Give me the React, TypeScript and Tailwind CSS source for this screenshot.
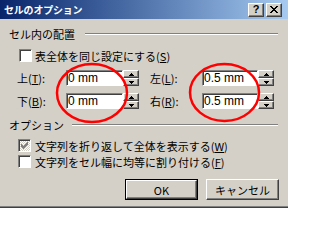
import React from "react";

const raised =
  "border border-t-white border-l-white border-r-[#404040] border-b-[#404040] shadow-[inset_-1px_-1px_0_#808080] bg-[#d4d0c8]";
const sunken =
  "border border-t-[#808080] border-l-[#808080] border-r-white border-b-white shadow-[inset_1px_1px_0_#404040]";

const CheckMark = () => (
  <svg width="7" height="7" viewBox="0 0 7 7" className="block">
    <g fill="#808080">
      <rect x="0" y="2" width="1" height="3" />
      <rect x="1" y="3" width="1" height="3" />
      <rect x="2" y="4" width="1" height="3" />
      <rect x="3" y="3" width="1" height="3" />
      <rect x="4" y="2" width="1" height="3" />
      <rect x="5" y="1" width="1" height="3" />
      <rect x="6" y="0" width="1" height="3" />
    </g>
  </svg>
);

const Checkbox = ({ checked }: { checked?: boolean }) => (
  <div
    className={`${sunken} w-[13px] h-[13px] flex items-center justify-center ${
      checked
        ? "bg-[repeating-conic-gradient(#d4d0c8_0%_25%,#ffffff_0%_50%)] bg-[length:2px_2px]"
        : "bg-white"
    }`}>
    {checked && <CheckMark />}
  </div>
);

const Spinner = () => (
  <div className="flex flex-col w-[16px] h-[16px]">
    <div className={`${raised} h-[8px] flex items-center justify-center`}>
      <svg width="5" height="3" viewBox="0 0 5 3" className="block">
        <path d="M2 0h1v1h1v1h1v1H0V2h1V1h1z" fill="#000" />
      </svg>
    </div>
    <div className={`${raised} h-[8px] flex items-center justify-center`}>
      <svg width="5" height="3" viewBox="0 0 5 3" className="block">
        <path d="M0 0h5v1H4v1H3v1H2V2H1V1H0z" fill="#000" />
      </svg>
    </div>
  </div>
);

const Field = ({
  label,
  keyChar,
  value,
  labelW,
  inputW,
}: {
  label: string;
  keyChar: string;
  value: string;
  labelW: string;
  inputW: string;
}) => (
  <div className="flex items-center">
    <div className={labelW}>
      {label}(<u>{keyChar}</u>):
    </div>
    <div
      className={`${sunken} ${inputW} h-[16px] bg-white flex items-center pl-[1px] font-['Liberation_Sans',sans-serif] text-[12px]`}>
      {value}
    </div>
    <Spinner />
  </div>
);

const Header = ({ text, gap }: { text: string; gap: string }) => (
  <div className="flex items-center h-[12px] pl-[9px] pr-[10px]">
    <span className="whitespace-nowrap">{text}</span>
    <div className={`flex-1 ${gap} border-t border-t-[#808080] border-b border-b-white`} />
  </div>
);

export default function App() {
  return (
    <div className="relative w-[288px] h-[208px] bg-[#d4d0c8] overflow-hidden text-black text-[11px] leading-[12px] font-['Noto_Sans_CJK_JP',sans-serif]">
      <div className="h-[19px] flex items-center justify-between bg-linear-to-r from-[#0a246a] to-[#a6caf0] pl-[4px] pr-[6px]">
        <span className="text-white font-bold text-[10px] tracking-[-0.2px]">セルのオプション</span>
        <div className="flex gap-[2px]">
          <div className={`${raised} w-[16px] h-[14px] flex items-center justify-center`}>
            <span className="font-['Liberation_Sans',sans-serif] font-bold text-[11px] leading-none">?</span>
          </div>
          <div className={`${raised} w-[16px] h-[14px] flex items-center justify-center`}>
            <svg width="8" height="7" viewBox="0 0 8 7" className="block">
              <path
                d="M0 0h2v1h1v1h2V1h1V0h2v1H7v1H6v1H5v1h1v1h1v1h1v1H6V6H5V5H3v1H2v1H0V6h1V5h1V4h1V3H2V2H1V1H0z"
                fill="#000"
              />
            </svg>
          </div>
        </div>
      </div>

      <div className="mt-[9px]">
        <Header text="セル内の配置" gap="ml-[10px]" />
      </div>

      <div className="mt-[9px] pl-[19px] flex items-center gap-[3px]">
        <Checkbox />
        <span>
          表全体を同じ設定にする(<u>S</u>)
        </span>
      </div>

      <div className="mt-[8px] pl-[17px] flex items-center gap-[11px]">
        <Field label="上" keyChar="T" value="0 mm" labelW="w-[49px]" inputW="w-[57px]" />
        <Field label="左" keyChar="L" value="0.5 mm" labelW="w-[52px]" inputW="w-[56px]" />
      </div>
      <div className="mt-[7px] pl-[17px] flex items-center gap-[11px]">
        <Field label="下" keyChar="B" value="0 mm" labelW="w-[49px]" inputW="w-[57px]" />
        <Field label="右" keyChar="R" value="0.5 mm" labelW="w-[52px]" inputW="w-[56px]" />
      </div>

      <div className="mt-[10px]">
        <Header text="オプション" gap="ml-[8px]" />
      </div>

      <div className="mt-[8px] pl-[18px] flex items-center gap-[4px]">
        <Checkbox checked />
        <span>
          文字列を折り返して全体を表示する(<u>W</u>)
        </span>
      </div>
      <div className="mt-[3px] pl-[18px] flex items-center gap-[4px]">
        <Checkbox />
        <span>
          文字列をセル幅に均等に割り付ける(<u>F</u>)
        </span>
      </div>

      <div className="mt-[11px] flex justify-end gap-[8px] pr-[9px]">
        <div className="border border-black">
          <div className={`${raised} w-[71px] h-[19px] flex items-center justify-center`}>OK</div>
        </div>
        <div className={`${raised} w-[73px] h-[21px] flex items-center justify-center`}>キャンセル</div>
      </div>

      <div className="absolute left-0 right-0 bottom-0 h-[2px] border-t border-t-[#808080] bg-[#404040]" />

      <svg
        className="absolute inset-0 pointer-events-none"
        width="288"
        height="208"
        viewBox="0 0 288 208">
        <ellipse cx="92" cy="93" rx="35" ry="29" fill="none" stroke="#ff0000" strokeWidth="2.5" />
        <ellipse cx="224.5" cy="92.5" rx="34.5" ry="28.5" fill="none" stroke="#ff0000" strokeWidth="2.5" />
      </svg>
    </div>
  );
}
